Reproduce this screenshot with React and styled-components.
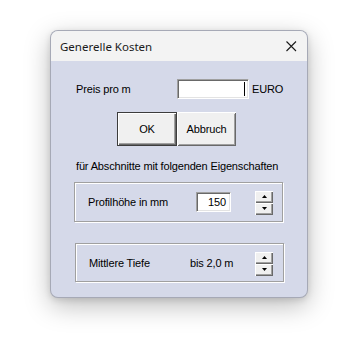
import React from "react";
import styled, { createGlobalStyle } from "styled-components";

const Global = createGlobalStyle`
  html, body { margin: 0; padding: 0; background: #ffffff; }
  body { width: 357px; height: 343px; overflow: hidden; }
  #root { padding: 30px 0 0 50px; }
`;

const Window = styled.div`
  box-sizing: border-box;
  width: 258px;
  height: 268px;
  border: 1px solid rgba(0, 0, 0, 0.22);
  border-radius: 8px;
  overflow: hidden;
  box-shadow: 0 8px 26px rgba(0, 0, 0, 0.26), 0 2px 6px rgba(0, 0, 0, 0.12);
  display: flex;
  flex-direction: column;
  background: #d5d9e9;
`;

const TitleBar = styled.div`
  height: 30px;
  flex: 0 0 30px;
  background: #f3f3f3;
  display: flex;
  align-items: center;
  justify-content: space-between;
  padding: 0 10px 0 9px;
  font-family: "Noto Sans", "Open Sans", sans-serif;
  font-size: 11.5px;
  color: #1a1a1a;
`;

const CloseIcon = () => (
  <svg width="11" height="11" viewBox="0 0 11 11">
    <path d="M0.5 0.5 L10 10 M10 0.5 L0.5 10" stroke="#1a1a1a" strokeWidth="1.1" fill="none" />
  </svg>
);

const Body = styled.div`
  flex: 1;
  display: flex;
  flex-direction: column;
  padding: 18px 0 0 23px;
  font-family: "Liberation Sans", Arial, sans-serif;
  font-size: 11px;
  letter-spacing: -0.15px;
  color: #000;
`;

const Row = styled.div`
  display: flex;
  align-items: center;
  padding-left: ${(p) => p.$indent || 0}px;
  height: ${(p) => p.$h || 20}px;
`;

const Label = styled.span`
  width: ${(p) => p.$w}px;
  flex: 0 0 auto;
  white-space: nowrap;
`;

const Sunken = styled.div`
  box-sizing: border-box;
  width: ${(p) => p.$w}px;
  height: 20px;
  background: #fff;
  border-top: 1px solid #a0a0a0;
  border-left: 1px solid #a0a0a0;
  border-right: 1px solid #fff;
  border-bottom: 1px solid #fff;
  box-shadow: inset 1px 1px 0 #696969, inset -1px -1px 0 #e3e3e3;
  display: flex;
  align-items: center;
  justify-content: flex-end;
  padding-right: ${(p) => p.$pr || 3}px;
  font-size: 11px;
`;

const Caret = styled.span`
  width: 1px;
  height: 14px;
  background: #000;
`;

const Unit = styled.span`
  margin-left: 3px;
`;

const ButtonRow = styled.div`
  display: flex;
  margin: 13px 0 0 43px;
`;

const Button = styled.div`
  box-sizing: border-box;
  width: ${(p) => p.$w}px;
  height: 34px;
  background: #f0f0f0;
  display: flex;
  align-items: center;
  justify-content: center;
  font-size: 11px;
  border: ${(p) => (p.$default ? "1px solid #3c3c3c" : "none")};
  box-shadow: ${(p) =>
    p.$default
      ? "inset 1px 1px 0 #fff, inset -1px -1px 0 #696969, inset -2px -2px 0 #a0a0a0"
      : "inset 1px 1px 0 #fff, inset -1px -1px 0 #696969, inset 2px 2px 0 #f0f0f0, inset -2px -2px 0 #a0a0a0"};
`;

const Note = styled.div`
  margin-top: 14px;
  padding-left: 2px;
  line-height: 13px;
  white-space: nowrap;
`;

const Group = styled.div`
  box-sizing: border-box;
  width: 209px;
  height: ${(p) => p.$h}px;
  margin-top: ${(p) => p.$mt}px;
  margin-left: ${(p) => p.$ml || 0}px;
  border: 1px solid #a0a0a0;
  box-shadow: inset 1px 1px 0 #fff, 1px 1px 0 #fff;
  display: flex;
  align-items: center;
  padding-left: 13px;
`;

const Spinner = styled.div`
  display: flex;
  flex-direction: column;
  margin-left: ${(p) => p.$ml}px;
  margin-top: ${(p) => p.$mt || 0}px;
`;

const SpinButton = styled.div`
  box-sizing: border-box;
  width: 18px;
  height: 12px;
  background: #f0f0f0;
  box-shadow: inset 1px 1px 0 #fff, inset -1px -1px 0 #696969, inset -2px -2px 0 #a0a0a0;
  display: flex;
  align-items: center;
  justify-content: center;
  padding-bottom: 1px;
`;

const Arrow = ({ down }) => (
  <svg width="5" height="3" viewBox="0 0 5 3">
    <path d={down ? "M0 0 H5 L2.5 3 Z" : "M0 3 H5 L2.5 0 Z"} fill="#000" />
  </svg>
);

const Spin = (props) => (
  <Spinner {...props}>
    <SpinButton>
      <Arrow />
    </SpinButton>
    <SpinButton>
      <Arrow down />
    </SpinButton>
  </Spinner>
);

export default function App() {
  return (
    <>
      <Global />
      <Window>
        <TitleBar>
          <span>Generelle Kosten</span>
          <CloseIcon />
        </TitleBar>
        <Body>
          <Row $indent={2}>
            <Label $w={101}>Preis pro m</Label>
            <Sunken $w={72} $pr={3}>
              <Caret />
            </Sunken>
            <Unit>EURO</Unit>
          </Row>
          <ButtonRow>
            <Button $w={60} $default>OK</Button>
            <Button $w={59}>Abbruch</Button>
          </ButtonRow>
          <Note>für Abschnitte mit folgenden Eigenschaften</Note>
          <Group $h={40} $mt={9}>
            <Label $w={108}>Profilhöhe in mm</Label>
            <Sunken $w={35} $pr={4}>150</Sunken>
            <Spin $ml={24} $mt={1} />
          </Group>
          <Group $h={39} $mt={21} $ml={1}>
            <Label $w={101}>Mittlere Tiefe</Label>
            <Label $w={65}>bis 2,0 m</Label>
            <Spin $ml={0} $mt={2} />
          </Group>
        </Body>
      </Window>
    </>
  );
}
